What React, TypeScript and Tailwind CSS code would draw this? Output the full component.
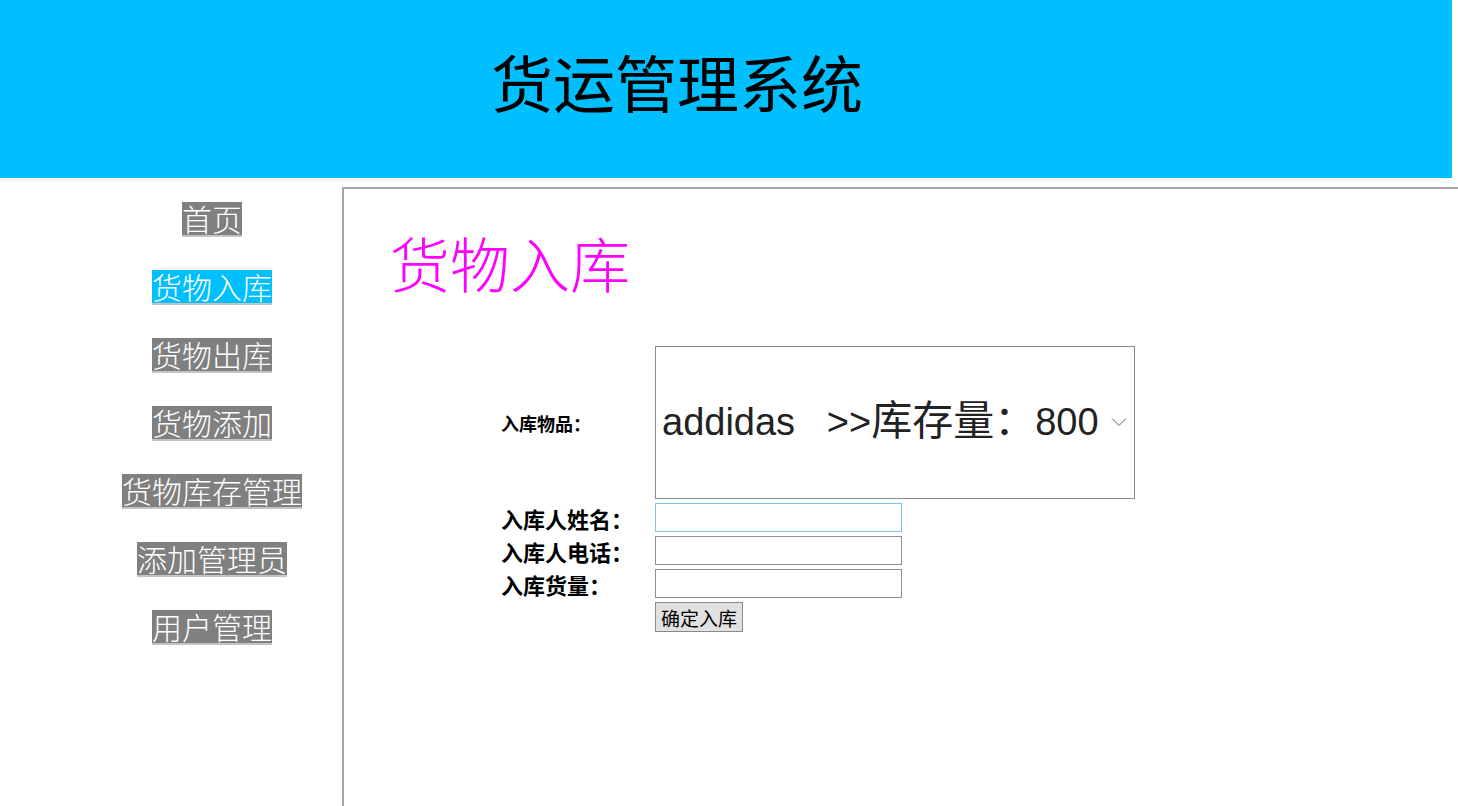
import React from "react";

const cjk = "font-['Noto_Sans_CJK_SC',sans-serif]";

const navItems = ["首页", "货物入库", "货物出库", "货物添加", "货物库存管理", "添加管理员", "用户管理"];

function Sidebar() {
  return (
    <aside className="w-[342px] shrink-0 pl-[82px] pt-[15px]">
      <ul className="flex flex-col items-center gap-[33px]">
        {navItems.map((item) => (
          <li key={item} className="flex h-[35px]">
            <a
              href="#"
              className={`${cjk} block h-[35px] border-b-2 border-[#c4c4c4] text-[30px] leading-[33px] font-light text-white ${
                item === "货物入库" ? "bg-[#00bfff]" : "bg-[#808080]"
              }`}
            >
              {item}
            </a>
          </li>
        ))}
      </ul>
    </aside>
  );
}

function Field({ label, focused }: { label: string; focused?: boolean }) {
  return (
    <>
      <label className={`${cjk} text-[22px] leading-none font-bold text-black`}>{label}</label>
      <input
        type="text"
        className={`h-[29px] w-[247px] border bg-white outline-none ${
          focused ? "border-[#7cc4e6]" : "border-[#8f8f8f]"
        }`}
      />
    </>
  );
}

export default function App() {
  return (
    <div className="min-h-[806px] bg-white">
      <header className="flex h-[178px] w-[1452px] items-center bg-[#00bfff] pb-[16px] pl-[491px]">
        <h1 className={`${cjk} text-[62px] leading-none font-normal text-black`}>货运管理系统</h1>
      </header>

      <div className="mt-[9px] flex">
        <Sidebar />

        <main className="h-[619px] flex-1 border-t-2 border-l-2 border-[#a6a6a6] pt-[43px] pl-[46px]">
          <h2 className={`${cjk} text-[60px] leading-none font-light text-[#ff00ff]`}>货物入库</h2>

          <form className="mt-[54px] ml-[111px] grid grid-cols-[154px_auto] items-center justify-start gap-y-1">
            <label className={`${cjk} text-[18px] leading-none font-bold text-black`}>入库物品：</label>
            <div className="flex h-[153px] w-[480px] items-center justify-between border border-[#8a8a8a] pr-[7px] pb-[7px] pl-[6px]">
              <span className="font-['Liberation_Sans','Noto_Sans_CJK_SC',sans-serif] text-[38px] whitespace-pre text-[#222]">
                {"addidas   >>"}
                <span className={`${cjk} text-[41px]`}>库存量：</span>
                {"800"}
              </span>
              <svg width="16" height="10" viewBox="0 0 16 10" fill="none" stroke="#666" strokeWidth="1" className="mt-[6px]">
                <path d="M1 1.5 L8 8.5 L15 1.5" />
              </svg>
            </div>

            <Field label="入库人姓名：" focused />
            <Field label="入库人电话：" />
            <Field label="入库货量：" />

            <span />
            <button
              type="button"
              className={`${cjk} h-[30px] w-[88px] border border-[#8a8a8a] bg-[#e1e1e1] text-[19px] leading-none text-black`}
            >
              确定入库
            </button>
          </form>
        </main>
      </div>
    </div>
  );
}
